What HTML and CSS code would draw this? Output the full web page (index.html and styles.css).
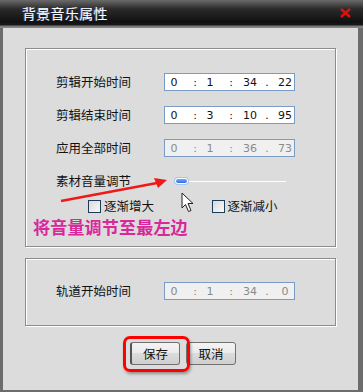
FILE: index.html
```html
<!DOCTYPE html>
<html>
<head>
  <title>背景音乐属性</title>
  <link rel="stylesheet" href="styles.css">
</head>
<body>
  <div class="Window">
    <div class="TitleBar">
      <span class="Title">背景音乐属性</span>
      <span class="Close">
        <svg width="11" height="10" viewBox="0 0 11 10"><path d="M1 1 L10 9 M10 1 L1 9" stroke="#e01010" stroke-width="2.4" fill="none"/></svg>
      </span>
    </div>

    <div class="Content">
      <div class="Group GroupMain">
        <div class="Row">
          <span class="Label">剪辑开始时间</span>
          <div class="Time"><span>0</span><i>:</i><span>1</span><i>:</i><span>34</span><i>.</i><span>22</span></div>
        </div>
        <div class="Row">
          <span class="Label">剪辑结束时间</span>
          <div class="Time"><span>0</span><i>:</i><span>3</span><i>:</i><span>10</span><i>.</i><span>95</span></div>
        </div>
        <div class="Row">
          <span class="Label">应用全部时间</span>
          <div class="Time Disabled"><span>0</span><i>:</i><span>1</span><i>:</i><span>36</span><i>.</i><span>73</span></div>
        </div>
        <div class="Row SliderRow">
          <span class="Label">素材音量调节</span>
          <div class="Slider"><span class="Thumb"></span></div>
        </div>
        <div class="Checks">
          <label class="Check"><span class="Box"></span>逐渐增大</label>
          <label class="Check"><span class="Box"></span>逐渐减小</label>
        </div>
        <div class="Note">将音量调节至最左边</div>

        <svg class="Arrow" width="112" height="30" viewBox="0 0 112 30">
          <path d="M2 26 L98 8" stroke="#f01818" stroke-width="2.4" fill="none"/>
          <path d="M108 5 L95 3 L99 13 Z" fill="#f01818"/>
        </svg>
        <svg class="Cursor" width="14" height="21" viewBox="0 0 14 21">
          <path d="M1 1 L1 16 L4.5 12.5 L7.5 19.5 L10 18.5 L7 11.5 L12 11.5 Z" fill="#fff" stroke="#222" stroke-width="1"/>
        </svg>
      </div>

      <div class="Group GroupTrack">
        <div class="Row">
          <span class="Label">轨道开始时间</span>
          <div class="Time Disabled"><span>0</span><i>:</i><span>1</span><i>:</i><span>34</span><i>.</i><span>0</span></div>
        </div>
      </div>

      <div class="Buttons">
        <span class="Button Save">保存</span>
        <span class="Button">取消</span>
      </div>
    </div>
  </div>
</body>
</html>
```

FILE: styles.css
```css
*
{
  margin: 0;
  padding: 0;
  box-sizing: border-box;
}

body
{
  width: 363px;
  height: 392px;
  overflow: hidden;
  background: #dcdcdc;
  font-family: "Noto Sans CJK SC", "Noto Sans", sans-serif;
  font-size: 12px;
  color: #111;
}

.Window
{
  width: 363px;
  height: 392px;
  display: flex;
  flex-direction: column;
}

.TitleBar
{
  height: 28px;
  display: flex;
  align-items: center;
  justify-content: space-between;
  padding: 0 12px 3px 22px;
  background: linear-gradient(#6a6a6a 0px, #2a2a2a 9px, #111 22px, #1a1a1a 25px, #777 26px, #888 28px);
}

.Title
{
  color: #fff;
  font-size: 14px;
  letter-spacing: 0.3px;
  text-shadow: -1px 0 0 rgba(90, 140, 255, 0.6);
}

.Close
{
  display: flex;
}

.Content
{
  flex: 1;
  position: relative;
  background: #dcdcdc;
  border-left: 3px solid #6c6c6c;
  border-right: 5px solid #6c6c6c;
  border-bottom: 2px solid #6c6c6c;
  padding: 20px 19px 0 22px;
}

.Group
{
  position: relative;
  width: 311px;
  border: 1px solid #8c8c8c;
  box-shadow: inset 1px 1px 0 #fff, 1px 1px 0 #fff;
}

.GroupMain
{
  height: 199px;
  padding: 24px 0 0 30px;
}

.GroupTrack
{
  height: 68px;
  margin-top: 11px;
  padding: 23px 0 0 30px;
}

.Row
{
  display: grid;
  grid-template-columns: 108px 131px;
  align-items: center;
  height: 18px;
  margin-bottom: 15px;
}

.Label
{
  font-size: 12.5px;
  line-height: 18px;
}

.Time
{
  height: 18px;
  display: flex;
  align-items: center;
  background: #fff;
  border: 1px solid #7a9cc4;
  font-family: "DejaVu Sans", sans-serif;
  font-size: 11px;
  color: #111;
}

/* fixed 14px cells, centred on the spot of each field */
.Time span,
.Time i
{
  flex: none;
  width: 14px;
  text-align: center;
  font-style: normal;
  white-space: nowrap;
}

.Time > :nth-child(1) { margin-left: 2px; }
.Time > :nth-child(2) { margin-left: 7px; }
.Time > :nth-child(3) { margin-left: 1px; }
.Time > :nth-child(4) { margin-left: 7px; }
.Time > :nth-child(5) { margin-left: 5px; }
.Time > :nth-child(6) { margin-left: 3px; }
.Time > :nth-child(7) { margin-left: 4px; }

.Disabled
{
  background: #f0f0f0;
  color: #8a8a8a;
}

.SliderRow
{
  margin-bottom: 0;
  height: 16px;
}

.Slider
{
  position: relative;
  width: 111px;
  height: 1px;
  margin-left: 11px;
  background: #b8b8b8;
  border-bottom: 1px solid #fff;
}

.Thumb
{
  position: absolute;
  left: 0;
  top: -3px;
  width: 13px;
  height: 6px;
  border-radius: 3px;
  background: linear-gradient(#6fa8ff, #2f6fe0);
  border: 1px solid #fff;
  box-shadow: 0 0 0 1px #a8c4f0;
}

.Checks
{
  display: flex;
  margin: 11px 0 0 32px;
  height: 14px;
}

.Check
{
  display: flex;
  align-items: center;
  font-size: 12.5px;
  line-height: 14px;
  width: 124px;
}

.Box
{
  width: 13px;
  height: 13px;
  margin-right: 3px;
  border: 1px solid #1c3c5c;
  background: linear-gradient(135deg, #d8d8d8, #fafafa);
}

.Note
{
  margin: 3px 0 0 -23px;
  font-size: 17px;
  font-weight: bold;
  line-height: 22px;
  color: #d8289a;
  letter-spacing: 0.2px;
}

.Arrow
{
  position: absolute;
  left: 33px;
  top: 126px;
}

.Cursor
{
  position: absolute;
  left: 155px;
  top: 143px;
}

.Buttons
{
  display: flex;
  gap: 6px;
  margin: 16px 0 0 105px;
}

.Button
{
  width: 50px;
  height: 23px;
  display: flex;
  align-items: center;
  justify-content: center;
  font-size: 12.5px;
  border: 1px solid #707070;
  border-radius: 3px;
  background: linear-gradient(#f4f4f4 0%, #ebebeb 45%, #dcdcdc 50%, #cfcfcf 100%);
}

.Save
{
  position: relative;
  border-left: 2px solid #555;
}

.Save::after
{
  content: "";
  position: absolute;
  left: -9px;
  top: -7px;
  width: 61px;
  height: 30px;
  border: 3px solid #f00;
  border-radius: 7px;
  box-shadow: 1px 2px 3px rgba(0, 0, 0, 0.35);
}
```
